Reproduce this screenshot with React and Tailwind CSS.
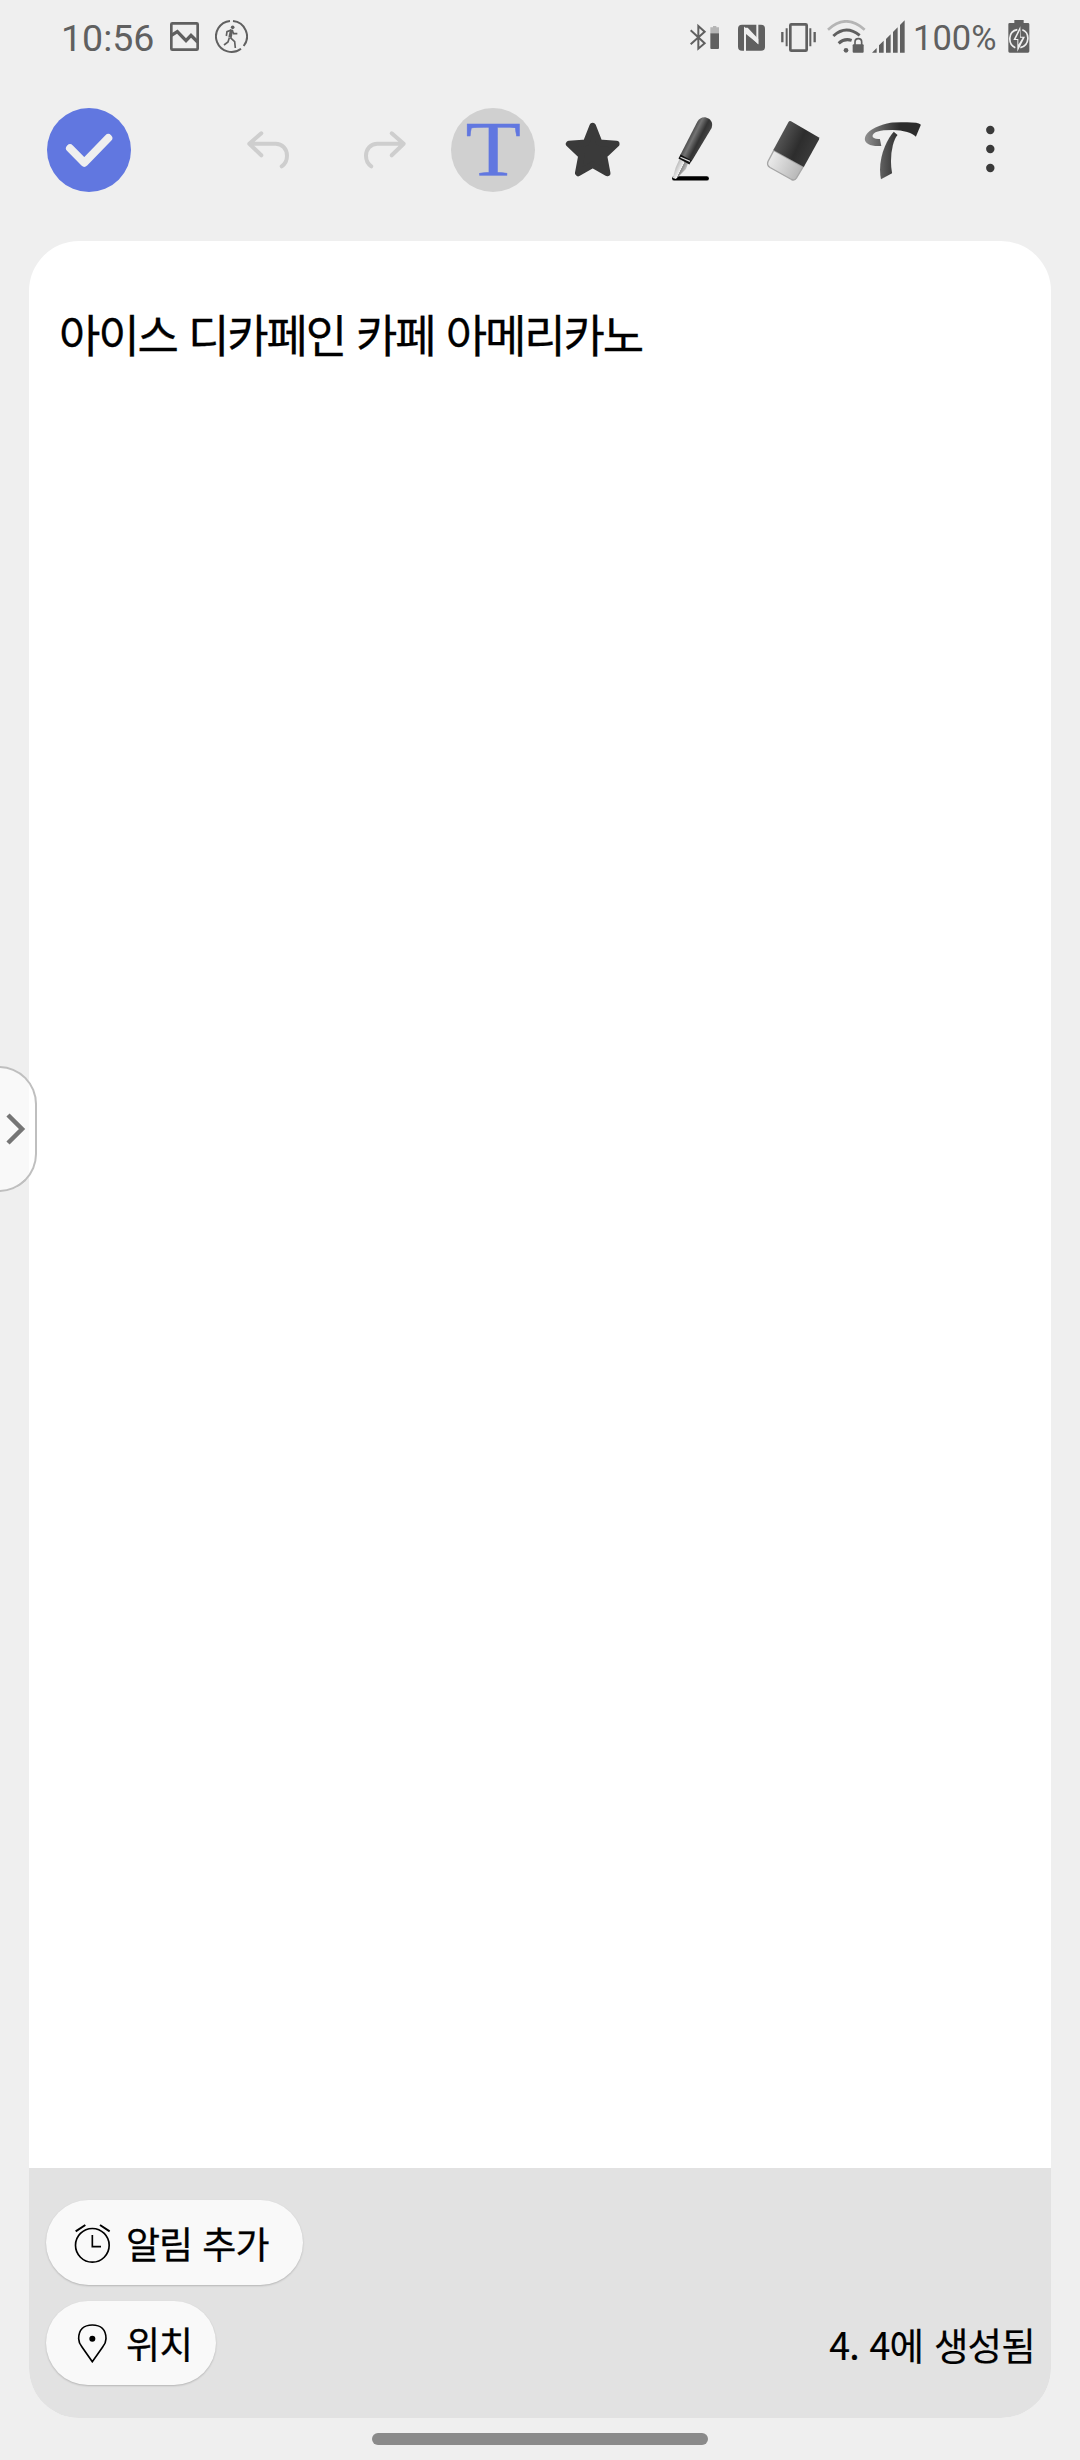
function StatusBar() {
  return (
    <div className="flex h-[73px] items-center pl-[61px] pr-[50px] text-[#606060]">
      <span className="w-[109px] shrink-0 pt-[2px] text-[37.500px] leading-[42px] font-[Roboto,sans-serif]">10:56</span>
      <svg className="h-[33px] w-[29px] shrink-0" viewBox="0 0 87 99" fill="none" stroke="currentColor">
        <rect x="4" y="10" width="79" height="79" rx="3" strokeWidth="8" />
        <path d="M4 46 L22 35 L48 62 L63 46 L83 66" strokeWidth="10" />
      </svg>
      <svg className="ml-4 h-[33px] w-[33px] shrink-0" viewBox="0 0 99 99" fill="none" stroke="currentColor" strokeLinecap="butt">
        <path d="M45 3 A46.500 46.500 0 1 0 78 86" strokeWidth="6" />
        <path d="M54 3 A46.500 46.500 0 0 1 86 78" strokeWidth="6" />
        <circle cx="53" cy="22" r="5.500" fill="currentColor" stroke="none" />
        <path d="M50 29 L45 53" strokeWidth="10" />
        <path d="M49 30 L36 35 L34 48 M51 30 L56 41 L67 41 M46 53 L59 65 L61 84 M43 53 L39 66 L27 75" strokeWidth="5" />
      </svg>

      <div className="flex-1" />

      <svg className="h-[33px] w-[30px] shrink-0" viewBox="0 0 90 99" fill="none" stroke="currentColor">
        <path d="M2 31 L44 70 L25 86 V18 L44 35 L2 73" strokeWidth="6" />
        <path d="M61 26 V22 H69 V18 H79 V22 H87 V40 H61 Z" fill="#b5b5b5" stroke="none" />
        <path d="M61 40 H87 V84 Q87 87 84 87 H64 Q61 87 61 84 Z" fill="currentColor" stroke="none" />
      </svg>
      <svg className="ml-[18px] h-[33px] w-[27px] shrink-0" viewBox="0 0 81 99">
        <rect y="14" width="81" height="78" rx="12" fill="currentColor" />
        <path d="M21 94 V27 L58 66 V12" fill="none" stroke="#efefef" strokeWidth="6" />
        <path d="M18 23 H29 L61 57 V72 L24 42 Z" fill="#efefef" />
      </svg>
      <svg className="ml-4 h-[33px] w-[35px] shrink-0" viewBox="0 0 105 99" fill="none" stroke="currentColor">
        <rect x="28" y="13" width="49" height="79" rx="3" strokeWidth="8" />
        <path d="M17 25 V79 M88 25 V79" strokeWidth="6" />
        <path d="M4 36 V67 M101 36 V67" strokeWidth="7" />
      </svg>
      <svg className="ml-[11px] h-[33px] w-[39px] shrink-0" viewBox="0 0 117 99" fill="none" stroke="currentColor">
        <path d="M3 29 Q57 -21 113 29" stroke="#b5b5b5" strokeWidth="8" />
        <path d="M19 48 Q57 13 98 46" strokeWidth="9" />
        <path d="M35 70 Q52 54 74 61" strokeWidth="9" />
        <circle cx="57" cy="91" r="7" fill="currentColor" stroke="none" />
        <path d="M84 75 V66 Q84 56 94 56 Q104 56 104 66 V75" strokeWidth="5" />
        <rect x="77" y="73" width="33" height="25" rx="3" fill="currentColor" stroke="none" />
      </svg>
      <svg className="ml-[6px] h-[33px] w-[33px] shrink-0" viewBox="0 0 99 99" fill="currentColor">
        <path d="M0 98 L14 84 V98 Z M21 76 L35 62 V98 H21 Z M42 57 L56 43 V98 H42 Z M63 36 L77 22 V98 H63 Z M84 15 L98 1 V98 H84 Z" />
      </svg>
      <span className="ml-[8px] w-[95px] shrink-0 pt-[2px] text-[34.500px] leading-[40px] font-[Roboto,sans-serif]">100%</span>
      <svg className="h-[33px] w-[22px] shrink-0" viewBox="0 0 66 99" fill="none">
        <path d="M19 0 H47 V9 H60 Q64 9 64 13 V94 Q64 98 60 98 H5 Q1 98 1 94 V13 Q1 9 5 9 H19 Z" fill="currentColor" />
        <path d="M28 29 C-1 34 -1 73 22 83 M43 29 C66 38 66 76 37 83" stroke="#efefef" strokeWidth="5" />
        <path d="M37 19 L16 60 H28 V95 L51 50 H38 Z" fill="#efefef" />
        <path d="M36 31 L23 57 H31 V74 L44 53 H36 Z" fill="currentColor" />
      </svg>
    </div>
  )
}

function UndoIcon({ className }) {
  return (
    <svg className={className} viewBox="0 0 100 100" fill="none" stroke="#cecece" strokeWidth="4" strokeLinecap="round" strokeLinejoin="round">
      <path d="M42.300 33.300 L30.300 43.700 L42.300 55.300 M30.300 43.700 H56.500 C63.200 43.700 68 49 68 55.700 C68 60 66 64 62.700 66.300" />
    </svg>
  )
}

function Toolbar() {
  return (
    <div className="flex h-[100px] items-center pl-[47px] mt-[27px]">
      <button className="size-[84px] shrink-0 rounded-full bg-[#6177e0]">
        <svg className="size-[84px]" viewBox="0 0 84 84" fill="none" stroke="#efefef" strokeWidth="8" strokeLinecap="round" strokeLinejoin="round">
          <path d="M23 40.300 L37.300 54.700 L61.300 30" />
        </svg>
      </button>
      <UndoIcon className="ml-[88px] size-[100px] shrink-0" />
      <UndoIcon className="ml-[15px] size-[100px] shrink-0 -scale-x-100" />
      <button className="ml-[17px] mr-2 flex size-[84px] shrink-0 items-center justify-center rounded-full bg-[#d0d0d0]">
        <span className="mb-[3px] scale-x-115 font-['Liberation_Serif',serif] text-[79px] leading-[84px] text-[#6177e0] [-webkit-text-stroke:0.400px_#6177e0]">T</span>
      </button>
      <svg className="size-[100px] shrink-0" viewBox="0 0 100 100">
        <path
          d="M49.700 26 L56.300 42.800 L73.300 44 L60.900 55.700 L64.200 73 L49.700 64.700 L35.200 73 L38.500 55.700 L26.100 44 L43.100 42.800 Z"
          fill="#3a3a3a" stroke="#3a3a3a" strokeWidth="6.500" strokeLinejoin="round"
        />
      </svg>
      <svg className="size-[100px] shrink-0" viewBox="0 0 100 100">
        <defs>
          <linearGradient id="barrel" gradientUnits="userSpaceOnUse" x1="44" y1="36" x2="60" y2="44">
            <stop offset="0" stopColor="#333" />
            <stop offset="0.35" stopColor="#747474" />
            <stop offset="0.7" stopColor="#333" />
            <stop offset="1" stopColor="#444" />
          </linearGradient>
          <linearGradient id="nib" gradientUnits="userSpaceOnUse" x1="33" y1="66" x2="43" y2="71">
            <stop offset="0" stopColor="#bbb" />
            <stop offset="0.5" stopColor="#eee" />
            <stop offset="0.55" stopColor="#888" />
            <stop offset="1" stopColor="#ccc" />
          </linearGradient>
        </defs>
        <path d="M31.300 78.400 H63.700" stroke="#000" strokeWidth="4.400" strokeLinecap="round" />
        <path d="M36.500 59 L45 63.500 L43 69 L33 79 L29.800 78 L32.500 68 Z" fill="url(#nib)" />
        <path d="M37 55.500 L54.300 21.800 C57 16.800 62 16 66 18.800 C69.500 21.500 69.800 25 68.300 28.500 L48.500 61.500 Z" fill="url(#barrel)" />
        <path d="M36.500 56.500 L47.500 62.500" stroke="#111" strokeWidth="4.500" />
        <path d="M37.500 57.200 L47 61.400" stroke="#ddd" strokeWidth="1.200" />
      </svg>
      <svg className="size-[100px] shrink-0" viewBox="0 0 100 100">
        <defs>
          <linearGradient id="sleeve" gradientUnits="userSpaceOnUse" x1="36" y1="40" x2="66" y2="54">
            <stop offset="0" stopColor="#535353" />
            <stop offset="0.6" stopColor="#2d2d2d" />
            <stop offset="1" stopColor="#383838" />
          </linearGradient>
          <linearGradient id="rubber" gradientUnits="userSpaceOnUse" x1="28" y1="58" x2="56" y2="72">
            <stop offset="0" stopColor="#e9e9e9" />
            <stop offset="1" stopColor="#b9b9b9" />
          </linearGradient>
        </defs>
        <path d="M30.800 50.500 L60 67 L53.500 78 C52.300 80 50.500 80.500 48.500 79.500 L27 67.500 C24.700 66 24 64 25 61.500 Z" fill="url(#rubber)" stroke="#a6a6a6" strokeWidth="1.400" />
        <path d="M45.500 22 Q46.500 20.500 48 21.300 L75.500 37.200 Q76.800 38 76 39.500 L60.800 67 L30.300 50 Z" fill="url(#sleeve)" />
      </svg>
      <div className="flex size-[100px] shrink-0 items-center justify-center">
        <span className="mt-[12px] scale-x-84 bg-linear-to-r from-[#8a8a8a] from-10% to-[#2c2c2c] to-60% bg-clip-text font-['DejaVu_Math_TeX_Gyre','DejaVu_Serif',serif] text-[68px] leading-[100px] text-transparent">𝓣</span>
      </div>
      <svg className="size-[100px] shrink-0" viewBox="0 0 100 100" fill="#3a3a3a">
        <circle cx="47.300" cy="30" r="4.200" />
        <circle cx="47.300" cy="49" r="4.200" />
        <circle cx="47.300" cy="68" r="4.200" />
      </svg>
    </div>
  )
}

function Chip({ label, className, children }) {
  return (
    <button className={`flex items-center rounded-full bg-[#f9f9f9] pl-[27px] shadow-[0_1px_2px_rgba(0,0,0,0.2)] ${className}`}>
      <svg className="size-[40px] shrink-0" viewBox="0 0 120 120" fill="none" stroke="#000" strokeWidth="5">
        {children}
      </svg>
      <span className="ml-[13px] whitespace-nowrap text-[37px] leading-[50px] tracking-[-1px] [word-spacing:3px] [-webkit-text-stroke:0.300px_#000]">{label}</span>
    </button>
  )
}

export default function App() {
  return (
    <div className="relative flex h-[2460px] w-[1080px] flex-col overflow-hidden bg-[#efefef] font-['Noto_Sans_CJK_KR',sans-serif] text-black">
      <StatusBar />
      <Toolbar />

      <main className="mx-[29px] mt-[41px] flex h-[2177px] flex-col overflow-hidden rounded-[50px] bg-white">
        <div className="flex-1 pl-[30px] pt-[60px]">
          <p className="whitespace-nowrap text-[45px] leading-[66px] tracking-[-2.100px] [word-spacing:3px] [-webkit-text-stroke:0.300px_#000]">아이스 디카페인 카페 아메리카노</p>
        </div>
        <footer className="flex h-[250px] items-end justify-between bg-[#e2e2e2] pb-[33px] pl-[17px] pr-[16px]">
          <div className="flex flex-col items-start gap-4">
            <Chip label="알림 추가" className="h-[85px] w-[257px]">
              <circle cx="58" cy="67" r="50.500" />
              <path d="M58 36 V71 H84" />
              <path d="M8 25 L37 6 M81 6 L110 25" strokeWidth="6" />
            </Chip>
            <Chip label="위치" className="h-[84px] w-[170px]">
              <path d="M58 116 L27 72 C20 63 17 56 17 47 C17 20 33 6 58 6 C83 6 99 20 99 47 C99 56 96 63 89 72 Z" />
              <circle cx="58" cy="47" r="9" fill="#000" stroke="none" />
            </Chip>
          </div>
          <span className="mb-[16px] whitespace-nowrap text-[37.500px] leading-[50px] tracking-[-0.800px] [word-spacing:3px] [-webkit-text-stroke:0.200px_#000]">4. 4에 생성됨</span>
        </footer>
      </main>

      <div className="mx-auto mt-[15px] h-[12px] w-[336px] rounded-full bg-[#8a8a8a]" />

      {/* drawer handle, sits over the page edge */}
      <button className="absolute left-[-2px] top-[1066px] flex h-[126px] w-[39px] items-center rounded-r-[38px] border-2 border-[#bfbfbf] bg-white/60">
        <svg className="h-[36px] w-[28px]" viewBox="0 0 28 36" fill="none" stroke="#757575" strokeWidth="4.500">
          <path d="M8 4 L22 18 L8 32" />
        </svg>
      </button>
    </div>
  )
}
